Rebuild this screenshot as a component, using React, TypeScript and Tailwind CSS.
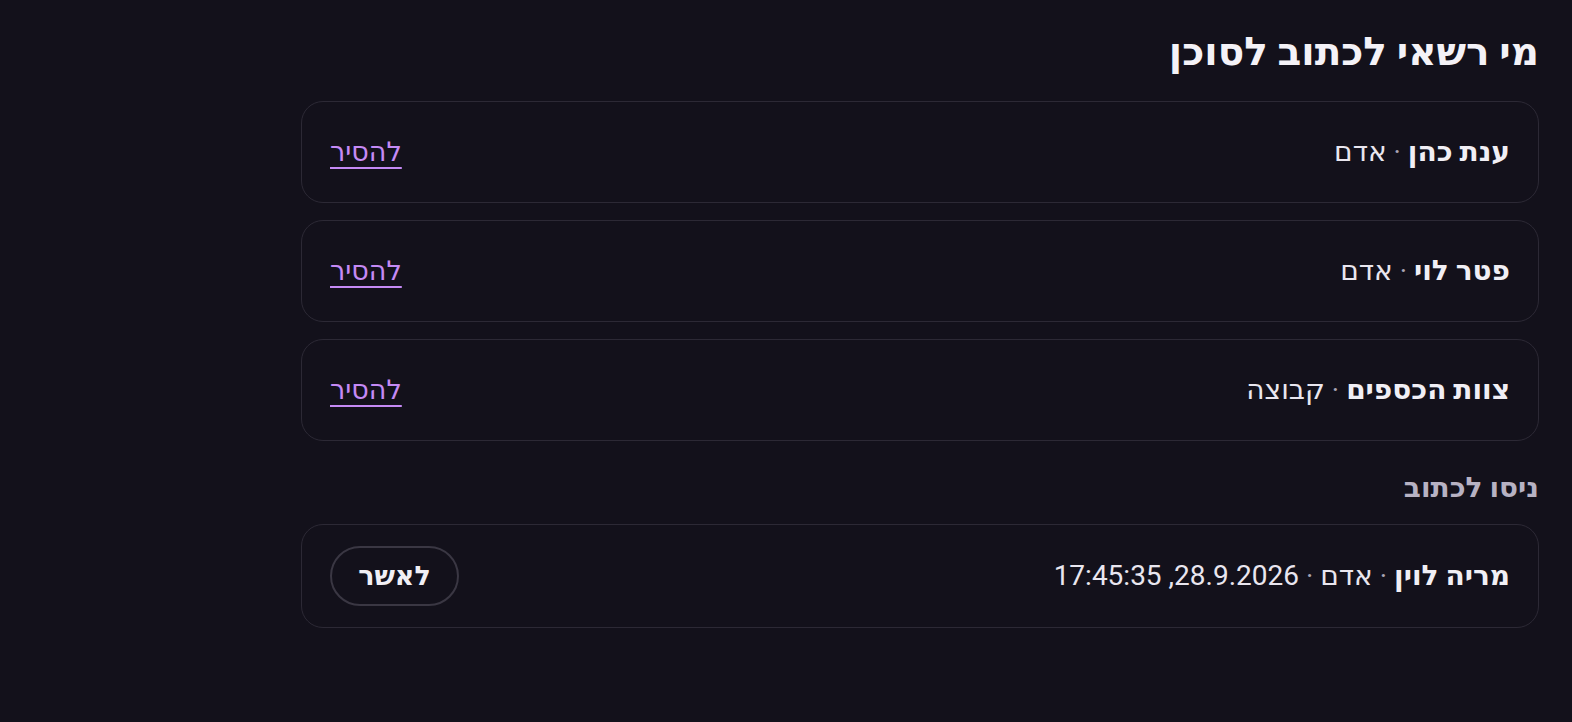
import React from "react";

const font = { fontFamily: "Roboto, 'Noto Sans', 'DejaVu Sans', sans-serif" };

function Row({ name, kind, extra, action }: { name: string; kind: string; extra?: string; action: React.ReactNode }) {
  return (
    <div className="flex min-h-[102px] items-center justify-between rounded-[22px] border border-[#2c2935] px-[28px] py-[21px]">
      <div className="text-[28px] leading-[42px] text-[#e9e6ef]">
        <span className="font-bold text-[#f1eff5]">{name}</span>
        <span className="text-[#a9a4b4]"> · </span>
        <span>{kind}</span>
        {extra && (
          <>
            <span className="text-[#a9a4b4]"> · </span>
            <span>{extra}</span>
          </>
        )}
      </div>
      {action}
    </div>
  );
}

const Remove = (
  <a href="#" className="text-[27px] leading-[42px] text-[#c58af5] underline underline-offset-[6px] decoration-[2px]">
    להסיר
  </a>
);

export default function App() {
  return (
    <div dir="rtl" style={font} className="min-h-[722px] w-full bg-[#13111b] pr-[33px] pl-[301px] pt-[28px]">
      <h1 className="text-[39px] font-bold leading-[48px] text-[#f4f2f7]">מי רשאי לכתוב לסוכן</h1>
      <div className="mt-[25px] flex flex-col gap-[17px]">
        <Row name="ענת כהן" kind="אדם" action={Remove} />
        <Row name="פטר לוי" kind="אדם" action={Remove} />
        <Row name="צוות הכספים" kind="קבוצה" action={Remove} />
      </div>
      <h2 className="mt-[29px] text-[28px] font-bold leading-[36px] text-[#b7b2c3]">ניסו לכתוב</h2>
      <div className="mt-[18px]">
        <Row
          name="מריה לוין"
          kind="אדם"
          extra="28.9.2026, 17:45:35"
          action={
            <button className="h-[60px] w-[129px] rounded-full border-2 border-[#3a3743] text-[27px] font-bold text-[#f1eff5]">
              לאשר
            </button>
          }
        />
      </div>
    </div>
  );
}
